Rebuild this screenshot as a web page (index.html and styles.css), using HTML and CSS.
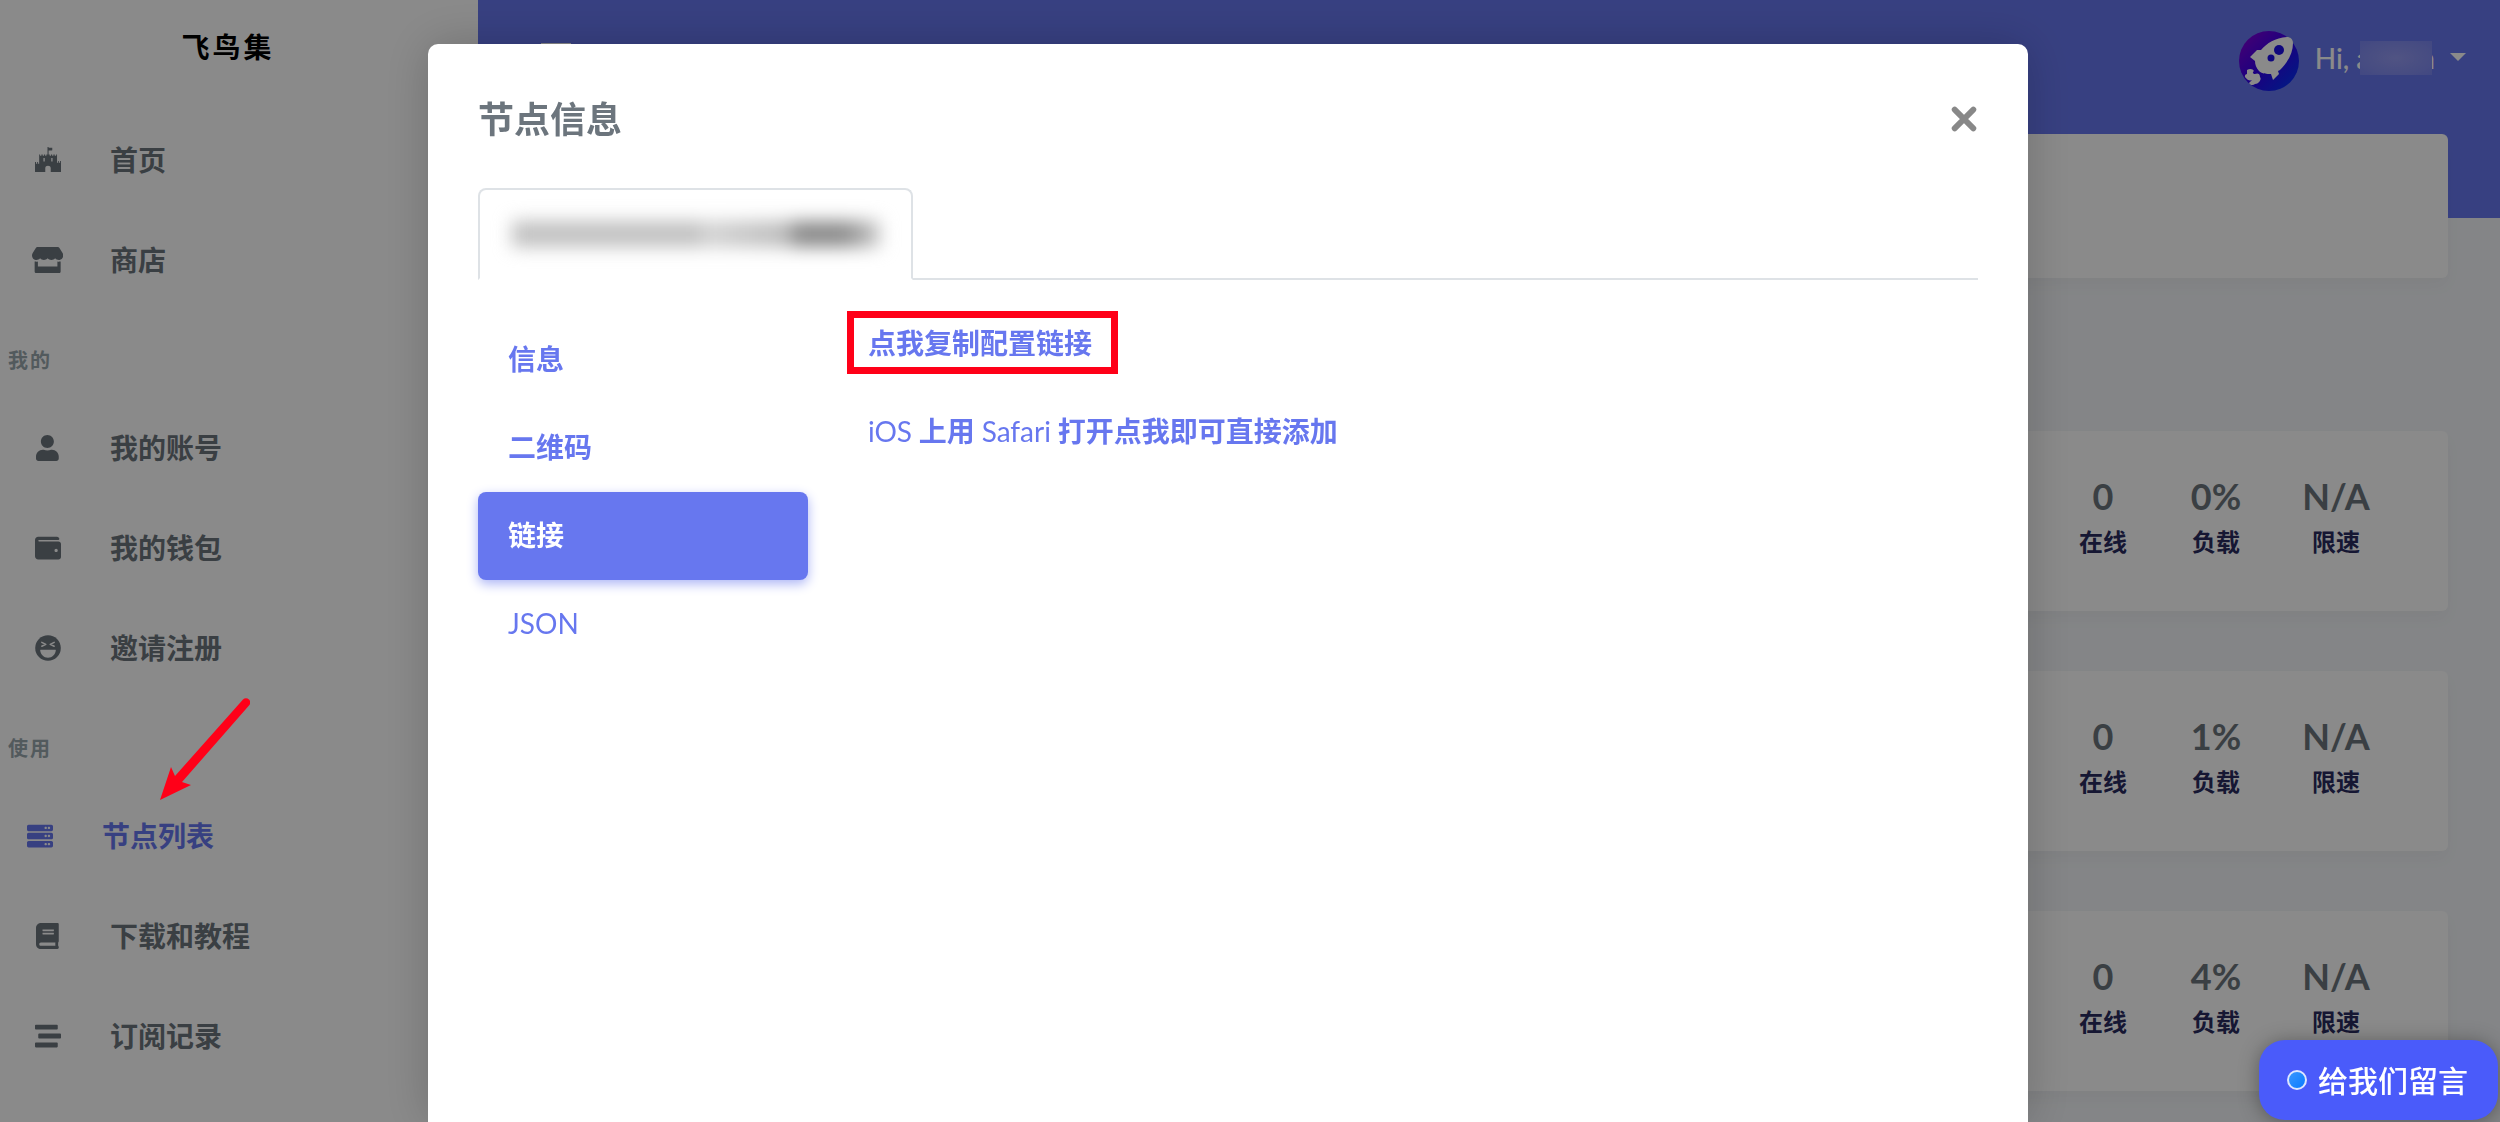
FILE: index.html
```html
<!DOCTYPE html>
<html lang="zh-CN">
<head>
<meta charset="utf-8">
<title>飞鸟集</title>
<link rel="stylesheet" href="styles.css">
</head>
<body>
<div class="app">
  <aside class="sidebar">
    <a class="brand" href="#">飞鸟集</a>
    <nav class="menu">
      <a class="menu-item" href="#"><span class="menu-icon"><svg viewBox="0 0 512 512"><path fill-rule="evenodd" d="M246 0h22v16c20-9 42 8 72-3v52c-28 12-50-5-72 5v78h22v24h24v-24h24v24h24v-24h26v24h28v-24h18v160h20v-32h16v32h24v-32h18v216H310v-76c0-60-108-60-108 0v76H0V296h20v32h22v-32h18v32h22V148h18v24h26v-24h26v24h24v-24h24v24h24v-24h22zM166 218v68h26v-68zm154 0v68h26v-68z"/></svg></span>首页</a>
      <a class="menu-item" href="#"><span class="menu-icon"><svg viewBox="0 0 616 512"><path d="M602 118.6L537.1 15C531.3 5.7 521 0 510 0H106C95 0 84.7 5.7 78.9 15L14 118.6c-33.5 53.5-3.8 127.9 58.8 136.4 4.5.6 9.1.9 13.7.9 29.6 0 55.8-13 73.8-33.1 18 20.1 44.3 33.1 73.8 33.1 29.6 0 55.8-13 73.8-33.1 18 20.1 44.3 33.1 73.8 33.1 29.6 0 55.8-13 73.8-33.1 18.1 20.1 44.3 33.1 73.8 33.1 4.7 0 9.2-.3 13.7-.9 62.8-8.4 92.6-82.8 59-136.4zM529.5 288c-10 0-19.9-1.5-29.5-3.8V384H116v-99.8c-9.6 2.2-19.5 3.8-29.5 3.8-6 0-12.1-.4-18-1.2-5.6-.8-11.1-2.1-16.4-3.6V480c0 17.7 14.3 32 32 32h448c17.7 0 32-14.3 32-32V283.2c-5.4 1.6-10.8 2.9-16.4 3.6-6.1.8-12.1 1.2-18.2 1.2z"/></svg></span>商店</a>
      <h2 class="menu-header">我的</h2>
      <a class="menu-item" href="#"><span class="menu-icon"><svg viewBox="0 0 448 512"><path d="M224 256c70.7 0 128-57.3 128-128S294.7 0 224 0 96 57.3 96 128s57.3 128 128 128zm89.6 32h-16.7c-22.2 10.2-46.9 16-72.9 16s-50.6-5.8-72.9-16h-16.7C60.2 288 0 348.2 0 422.4V464c0 26.5 21.5 48 48 48h352c26.5 0 48-21.5 48-48v-41.6c0-74.2-60.2-134.4-134.4-134.4z"/></svg></span>我的账号</a>
      <a class="menu-item" href="#"><span class="menu-icon"><svg viewBox="0 0 512 512"><path d="M461.2 128H80c-8.84 0-16-7.16-16-16s7.16-16 16-16h384c8.84 0 16-7.16 16-16 0-26.51-21.49-48-48-48H64C28.65 32 0 60.65 0 96v320c0 35.35 28.65 64 64 64h397.2c28.02 0 50.8-21.53 50.8-48V176c0-26.47-22.78-48-50.8-48zM416 336c-17.67 0-32-14.33-32-32s14.33-32 32-32 32 14.33 32 32-14.33 32-32 32z"/></svg></span>我的钱包</a>
      <a class="menu-item" href="#"><span class="menu-icon"><svg viewBox="0 0 512 512"><circle cx="256" cy="256" r="252"/><path fill="#fff" d="M110 288q-10 0-8 12c8 82 70 148 154 148s146-66 154-148q2-12-8-12z"/><path fill="none" stroke="#fff" stroke-width="30" stroke-linecap="round" stroke-linejoin="round" d="M134 146l78 38-78 38M378 146l-78 38 78 38"/></svg></span>邀请注册</a>
      <h2 class="menu-header">使用</h2>
      <a class="menu-item active" href="#"><span class="menu-icon"><svg viewBox="0 0 512 512"><path fill-rule="evenodd" d="M480 160H32c-17.7 0-32-14.3-32-32V64c0-17.7 14.3-32 32-32h448c17.7 0 32 14.3 32 32v64c0 17.7-14.3 32-32 32zm-48-88c-13.3 0-24 10.7-24 24s10.7 24 24 24 24-10.7 24-24-10.7-24-24-24zm-64 0c-13.3 0-24 10.7-24 24s10.7 24 24 24 24-10.7 24-24-10.7-24-24-24zM480 320H32c-17.7 0-32-14.3-32-32v-64c0-17.7 14.3-32 32-32h448c17.7 0 32 14.3 32 32v64c0 17.7-14.3 32-32 32zm-48-88c-13.3 0-24 10.7-24 24s10.7 24 24 24 24-10.7 24-24-10.7-24-24-24zm-64 0c-13.3 0-24 10.7-24 24s10.7 24 24 24 24-10.7 24-24-10.7-24-24-24zM480 480H32c-17.7 0-32-14.3-32-32v-64c0-17.7 14.3-32 32-32h448c17.7 0 32 14.3 32 32v64c0 17.7-14.3 32-32 32zm-48-88c-13.3 0-24 10.7-24 24s10.7 24 24 24 24-10.7 24-24-10.7-24-24-24zm-64 0c-13.3 0-24 10.7-24 24s10.7 24 24 24 24-10.7 24-24-10.7-24-24-24z"/></svg></span>节点列表</a>
      <a class="menu-item" href="#"><span class="menu-icon"><svg viewBox="0 0 448 512"><path d="M448 360V24c0-13.3-10.7-24-24-24H96C43 0 0 43 0 96v320c0 53 43 96 96 96h328c13.3 0 24-10.7 24-24v-16c0-7.5-3.5-14.3-8.9-18.7-4.2-15.4-4.2-59.3 0-74.7 5.4-4.3 8.9-11.1 8.9-18.6zM128 134c0-3.3 2.7-6 6-6h212c3.3 0 6 2.7 6 6v20c0 3.3-2.7 6-6 6H134c-3.3 0-6-2.7-6-6v-20zm0 64c0-3.3 2.7-6 6-6h212c3.3 0 6 2.7 6 6v20c0 3.3-2.7 6-6 6H134c-3.3 0-6-2.7-6-6v-20zm253.4 250H96c-17.7 0-32-14.3-32-32 0-17.6 14.4-32 32-32h285.4c-1.9 17.1-1.9 46.9 0 64z"/></svg></span>下载和教程</a>
      <a class="menu-item" href="#"><span class="menu-icon"><svg viewBox="0 0 512 512"><path d="M16 128h416c8.84 0 16-7.16 16-16V48c0-8.84-7.16-16-16-16H16C7.16 32 0 39.16 0 48v64c0 8.84 7.16 16 16 16zm480 80H80c-8.84 0-16 7.16-16 16v64c0 8.84 7.16 16 16 16h416c8.84 0 16-7.16 16-16v-64c0-8.84-7.16-16-16-16zm-64 176H16c-8.84 0-16 7.16-16 16v64c0 8.84 7.16 16 16 16h416c8.84 0 16-7.16 16-16v-64c0-8.84-7.16-16-16-16z"/></svg></span>订阅记录</a>
    </nav>
  </aside>

  <div class="main">
    <header class="topbar">
      <button class="nav-toggle" type="button" aria-label="菜单"></button>
      <a class="user" href="#">
        <svg class="avatar" viewBox="0 0 60 60">
          <defs><linearGradient id="sky" x1="0" y1="0" x2="1" y2="1"><stop offset="0.1" stop-color="#7a00d8"/><stop offset="0.5" stop-color="#3200ec"/><stop offset="0.85" stop-color="#0a28f4"/></linearGradient></defs>
          <circle cx="30" cy="30" r="30" fill="url(#sky)"/>
          <path fill="#fff" d="M48 6c3 0 6 2 6 6 0 9-4 18-13 27l-2 1 1 3-6 6-2-6c-4 0-9 0-12-3s-4-7-4-10l-5-4 7-7 4 0c6-7 14-12 26-13z"/>
          <circle cx="40" cy="19" r="5" fill="#1d0ce8"/><circle cx="32" cy="27" r="3.5" fill="#1d0ce8"/>
          <path fill="#fff" d="M8 39c3-2 6-1 7 1-2 1-1 3 1 3 2-1 5-1 5 3 2 2-1 7-5 7-2 2-5 1-6-1l3-3c-2 1-5 0-6-2-2-1-1-4 1-4z"/>
        </svg>
        <span class="greeting">Hi, a<span class="masked"></span>n</span>
        <span class="caret"></span>
      </a>
    </header>
    <div class="content">
      <section class="card intro"></section>
      <section class="card node">
        <dl class="stats">
          <div class="stat"><dd>0</dd><dt>在线</dt></div>
          <div class="stat"><dd>0%</dd><dt>负载</dt></div>
          <div class="stat"><dd>N/A</dd><dt>限速</dt></div>
        </dl>
      </section>
      <section class="card node">
        <dl class="stats">
          <div class="stat"><dd>0</dd><dt>在线</dt></div>
          <div class="stat"><dd>1%</dd><dt>负载</dt></div>
          <div class="stat"><dd>N/A</dd><dt>限速</dt></div>
        </dl>
      </section>
      <section class="card node">
        <dl class="stats">
          <div class="stat"><dd>0</dd><dt>在线</dt></div>
          <div class="stat"><dd>4%</dd><dt>负载</dt></div>
          <div class="stat"><dd>N/A</dd><dt>限速</dt></div>
        </dl>
      </section>
    </div>
  </div>
</div>

<div class="backdrop">
  <div class="modal" role="dialog" aria-labelledby="modal-title">
    <div class="modal-head">
      <h1 id="modal-title">节点信息</h1>
      <button class="close" type="button" aria-label="关闭"><svg viewBox="0 0 24 24"><path d="M4 4l16 16M20 4L4 20"/></svg></button>
    </div>
    <div class="tabs">
      <button class="tab" type="button" aria-label="节点">
        <span class="smudge"><i class="smudge-a"></i><i class="smudge-b"></i><i class="smudge-c"></i></span>
      </button>
    </div>
    <div class="modal-body">
      <nav class="pills">
        <a class="pill" href="#">信息</a>
        <a class="pill" href="#">二维码</a>
        <a class="pill selected" href="#">链接</a>
        <a class="pill" href="#"><span class="latin">JSON</span></a>
      </nav>
      <div class="links">
        <a class="marked" href="#">点我复制配置链接</a>
        <a href="#"><span class="latin">iOS</span> 上用 <span class="latin">Safari</span> 打开点我即可直接添加</a>
      </div>
    </div>
  </div>
</div>

<svg class="arrow" viewBox="0 0 100 110"><path d="M10 104L21 71l4 9L93 3.500a4 4 0 0 1 6 6L32 86l9 3z"/></svg>

<button class="chat" type="button"><span class="dot"></span>给我们留言</button>
</body>
</html>
```
FILE: styles.css
```css
* { box-sizing: border-box; }

body {
  margin: 0;
  height: 100vh;
  overflow: hidden;
  background: #f4f6f9;
  color: #6c757d;
  font: 500 28px/54px Lato, "Noto Sans CJK SC", sans-serif;
}

a { color: #6777ef; text-decoration: none; }
button { padding: 0; border: 0; background: none; font: inherit; }
h1, h2, dl, dd, dt { margin: 0; }
svg { display: block; }

.app { display: flex; min-height: 100vh; isolation: isolate; }

/* Sidebar */
.sidebar { flex: none; width: 478px; background: #fff; }
.brand {
  display: block;
  padding: 20px 0;
  margin-bottom: 16px;
  font-weight: 700;
  letter-spacing: 3px;
  text-align: center;
  text-indent: -22px;
  color: #000;
}
.menu-item {
  display: flex;
  align-items: center;
  height: 100px;
  padding-left: 20px;
  color: #6c757d;
  font-weight: 700;
}
.menu-item.active { padding-left: 12px; color: #6777ef; }
.menu-icon {
  display: flex;
  justify-content: center;
  width: 55px;
  margin-right: 35px;
}
.menu-icon svg { height: 26px; fill: currentColor; }
.menu-header {
  height: 88px;
  padding-left: 8px;
  font-size: 20px;
  font-weight: 700;
  line-height: 100px;
  letter-spacing: 2px;
  color: #98a6ad;
}

/* Main column */
.main {
  flex: 1;
  min-width: 0;
  background: linear-gradient(#6777ef 218px, transparent 218px);
}
.topbar {
  display: flex;
  justify-content: space-between;
  align-items: center;
  height: 134px;
  padding: 0 34px 12px 63px;
}
.nav-toggle { width: 30px; height: 36px; border-top: 4px solid #fff; border-bottom: 4px solid #fff; }
.user { display: flex; align-items: center; color: #fff; }
.avatar { width: 60px; height: 60px; margin-right: 16px; }
.greeting { display: flex; align-items: center; padding-bottom: 6px; }
.masked {
  z-index: 1;
  width: 72px;
  height: 34px;
  margin: 0 -13px 0 -10px;
  background: radial-gradient(#959bf2, #7a86f0);
}
.caret {
  margin: 0 0 8px 15px;
  border: 8px solid transparent;
  border-top-color: #fff;
  border-bottom: 0;
}
.content { padding: 0 52px 0 60px; }
.card {
  margin-bottom: 60px;
  border-radius: 6px;
  background: #fff;
  box-shadow: 0 8px 16px rgba(0, 0, 0, .03);
}
.intro { height: 144px; margin-bottom: 153px; }
.node { padding: 42px 80px 46px; }
.stats {
  display: grid;
  grid-template-columns: 50px 56px 64px;
  gap: 60px;
  justify-content: end;
}
.stat {
  display: flex;
  flex-direction: column;
  align-items: center;
  line-height: 46px;
  white-space: nowrap;
}
.stat dd { font-size: 36px; font-weight: 700; }
.stat dt { font-size: 24px; font-weight: 700; color: #2a2c5e; }

/* Modal */
.backdrop {
  position: fixed;
  inset: 0;
  display: flex;
  justify-content: center;
  padding-top: 44px;
  padding-right: 44px;
  background: rgba(0, 0, 0, .46);
}
.modal {
  width: 1600px;
  padding: 48px 50px;
  border-radius: 10px 10px 0 0;
  background: #fff;
  box-shadow: 0 0 48px rgba(0, 0, 0, .2);
}
.modal-head {
  display: flex;
  justify-content: space-between;
  align-items: center;
  margin-bottom: 42px;
}
.modal-head h1 { font-size: 36px; font-weight: 700; line-height: 54px; }
.close svg { width: 28px; fill: none; stroke: #888; stroke-width: 5; stroke-linecap: round; }
.tabs { display: flex; border-bottom: 2px solid #dee2e6; }
.tab {
  width: 435px;
  height: 92px;
  margin-bottom: -2px;
  padding: 0 20px;
  border: 2px solid #dee2e6;
  border-bottom-color: #fff;
  border-radius: 8px 8px 0 0;
  background: #fff;
}
.smudge { display: flex; justify-content: center; align-items: center; filter: blur(9px); }
.smudge i { height: 26px; }
.smudge-a { width: 190px; background: #c0c0c0; }
.smudge-b { width: 90px; background: linear-gradient(90deg, #d4d4d4, #b8b8b8); }
.smudge-c { width: 88px; background: linear-gradient(90deg, #888 60%, #ccc); }
.modal-body { display: flex; gap: 4%; padding-top: 36px; font-weight: 700; }
.latin { font-weight: 400; }
.pills { width: 22%; }
.pill { display: block; padding: 16px 30px 18px; border-radius: 8px; }
.pill.selected {
  background: #6777ef;
  color: #fff;
  box-shadow: 0 4px 12px #acb5f6;
}
.links { display: flex; flex-direction: column; align-items: flex-start; gap: 34px; }
.marked { position: relative; }
.marked::after {
  content: "";
  position: absolute;
  inset: -5px -26px -4px -21px;
  border: 7px solid #ff0018;
}

/* Floating items */
.arrow { position: absolute; left: 150px; top: 696px; width: 100px; fill: #ff0018; }
.chat {
  position: fixed;
  right: 2px;
  bottom: 2px;
  display: flex;
  align-items: center;
  gap: 11px;
  height: 80px;
  padding: 0 30px 0 28px;
  border-radius: 26px;
  background: #4a5bfa;
  color: #fff;
  font-size: 30px;
  box-shadow: 0 2px 20px rgba(0, 0, 0, .35);
}
.dot {
  width: 20px;
  height: 20px;
  border: 2px solid #dde6ff;
  border-radius: 50%;
  background: linear-gradient(135deg, #3a96ff, #0a7cff);
}
```
